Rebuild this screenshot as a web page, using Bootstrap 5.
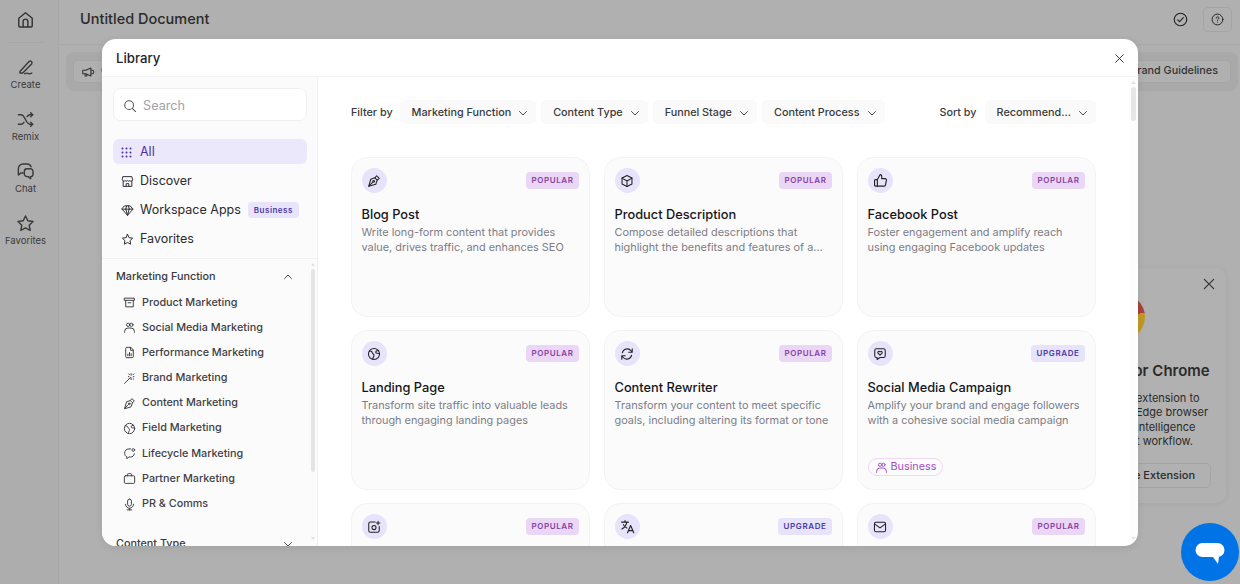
<!DOCTYPE html>
<html lang="en">
<head>
  <meta charset="UTF-8">
  <title>Library</title>
  <link href="https://cdn.jsdelivr.net/npm/bootstrap@5.3.0/dist/css/bootstrap.min.css" rel="stylesheet">
  <style>
    html, body { height: 100%; overflow: hidden; }
    body { font-family: Inter, "Liberation Sans", sans-serif; background: #b0b0b0; color: #26262b; }
    svg.ic { fill: none; stroke: currentColor; stroke-width: 1.8; stroke-linecap: round; stroke-linejoin: round; flex: none; }

    /* page behind the dialog */
    .app-rail { width: 59px; padding-right: 7px; background: #adadad; border-right: 1px solid #a8a8a8; color: #333; flex: none; }
    .rail-home { height: 43px; width: 36px; padding-bottom: 3px; border-bottom: 1px solid #a6a6a6; margin-bottom: 1px; }
    .rail-item { width: 52px; height: 52px; font-size: 9.5px; color: #3a3a3a; padding-top: 14px; line-height: 12px; gap: 2px; }
    .app-top { height: 45px; padding: 0 8px 6px 21px; border-bottom: 1px solid #a8a8a8; }
    .app-title { font-size: 14.5px; font-weight: 500; color: #2a2a2a; }
    .help-box { width: 29px; height: 25px; border: 1px solid #a4a4a4; border-radius: 5px; margin-left: 15px; }
    .tool-row { padding: 7px 2px 0 7px; }
    .tool-wrap { background: #a9a9a9; border-radius: 8px; padding: 8px 7px; height: 39px; }
    .tool-chip { background: #b0b0b0; border: 1px solid #a6a6a6; border-radius: 5px; height: 23px; font-size: 10.8px; padding: 0 12px 0 7px; color: #333; font-weight: 500; gap: 6px; }

    .ext-pop { position: absolute; top: 268px; left: 1098px; width: 128px; height: 235px; background: #b1b1b1; border-radius: 10px; box-shadow: 0 1px 6px rgba(0,0,0,.06); color: #2b2b2b; padding: 26px 15px 0 1px; }
    .ext-close { position: absolute; top: 8px; right: 9px; color: #333; }
    .ext-logo { width: 46px; height: 46px; flex: none; border-radius: 50%; background: conic-gradient(#a9413a 0 22%, #bf9a24 22% 60%, #4c8a53 60%); margin-bottom: 22px; }
    .ext-head { font-size: 15px; font-weight: 600; margin-bottom: 11px; line-height: 18px; white-space: nowrap; padding-left: 29px; }
    .ext-text { font-size: 11px; line-height: 14.4px; white-space: nowrap; margin-bottom: 14px; padding-left: 37px; }
    .ext-btn { height: 25px; border: 1px solid #a4a4a4; border-radius: 5px; font-size: 11px; font-weight: 500; padding-right: 15px; white-space: nowrap; }
    .chat-fab { position: absolute; left: 1181px; top: 523px; width: 58px; height: 58px; border-radius: 50%; background: #0073e6; }

    /* dialog */
    .lib-dialog { position: absolute; left: 102px; top: 39px; width: 1036px; height: 507px; background: #fff; border-radius: 14px; overflow: hidden; display: flex; flex-direction: column; box-shadow: 0 2px 8px rgba(0,0,0,.08); }
    .lib-head { height: 38px; padding: 2px 12px 0 14px; border-bottom: 1px solid #f4f4f5; flex: none; }
    .lib-head-title { font-size: 13.2px; font-weight: 500; color: #24242a; }
    .lib-side { width: 216px; background: #fbfbfb; border-right: 1px solid #f1f1f2; flex: none; min-height: 0; }
    .side-top { padding: 11px 10px 7px 11px; border-bottom: 1px solid #f1f1f2; }
    .side-search { height: 33px; background: #fff; border: 1px solid #f0f0f1; border-radius: 7px; padding: 2px 9px 0; font-size: 12.7px; color: #a2a2a8; margin-bottom: 18px; gap: 6px; }
    .side-nav { gap: 4px; }
    .side-link { height: 25px; padding: 1px 8px 0; border-radius: 6px; font-size: 12.5px; color: #2a2a30; gap: 6px; white-space: nowrap; }
    .side-link.is-on { background: #ece8fc; color: #4a2fa3; }
    .biz-tag { background: #e8e4fb; color: #4f3ba8; font-size: 8px; font-weight: 600; letter-spacing: .5px; padding: 0 6px; height: 16px; line-height: 16px; border-radius: 4px; margin-left: 1px; }
    .side-list { padding: 5px 0 0 14px; min-width: 0; }
    .side-group { height: 26px; padding: 0 14px 0 0; font-size: 10.8px; font-weight: 500; color: #3a3a40; }
    .side-row { height: 25.2px; padding-left: 7px; font-size: 10.8px; font-weight: 500; color: #3f3f45; gap: 6px; white-space: nowrap; }
    .side-bar-col { width: 9px; padding: 0 2px 0 3px; flex: none; }
    .side-thumb { height: 203px; background: #e4e4e6; border-radius: 3px; }
    .bar-arrow { height: 10px; color: #e2e2e4; line-height: 0; }

    .lib-main { min-width: 0; }
    .lib-scroll { padding: 23px 0 0 33px; min-width: 0; }
    .filter-row { width: 745px; height: 24px; margin-bottom: 33px; font-size: 10.8px; color: #3a3a40; font-weight: 500; }
    .filter-lab { padding-top: 2px; margin-right: 8px; }
    .filter-btn { height: 24px; background: #fafafa; border: 0; border-radius: 5px; font-size: 10.8px; font-weight: 500; color: #3a3a40; padding: 2px 7px 0 12px; gap: 6px; white-space: nowrap; --bs-btn-hover-bg: #f4f4f4; }
    .filter-group { gap: 5px; margin-left: -1px; }
    .tile-grid { display: grid; grid-template-columns: repeat(3, 239px); grid-auto-rows: 160px; column-gap: 14px; row-gap: 13px; }
    .tile { background: #fbfbfc; border: 1px solid #f3f3f5; border-radius: 16px; }
    .tile .card-body { padding: 10px 10px 13px 9.5px; }
    .tile-icon { width: 25px; height: 25px; border-radius: 50%; background: #e6e3fb; color: #222; }
    .tile-badge { font-size: 8px; font-weight: 600; letter-spacing: .6px; padding: 0 5.5px; height: 17px; line-height: 17px; border-radius: 4px; margin-top: 4px; }
    .tile-badge.is-pop { background: #e9d7f5; color: #8a3fa5; }
    .tile-badge.is-up { background: #e6e3fb; color: #4b3aa8; }
    .tile-title { font-size: 12.8px; font-weight: 500; color: #16161a; line-height: 16px; margin: 14px 0 2px; }
    .tile-desc { font-size: 10.9px; line-height: 14.5px; color: #7d7d86; margin: 0; }
    .biz-chip { border: 1px solid #eed8f4; border-radius: 9px; height: 18px; font-size: 10.8px; color: #a44fc0; padding: 1px 6px 0; gap: 3px; align-self: flex-start; }
    .main-bar-col { width: 8px; padding: 0 1px 0 2px; flex: none; margin-right: 1px; background: #fdfdfd; }
    .main-thumb { height: 34px; background: #e6e6e8; border-radius: 3px; }
  </style>
</head>
<body>

  <!-- page under the dialog -->
  <div class="d-flex h-100">
    <div class="app-rail d-flex flex-column align-items-center">
      <div class="rail-home d-flex align-items-center justify-content-center">
        <svg class="ic" width="19" height="19" viewBox="0 0 24 24"><path d="M3.5 10.5 12 3.500l8.500 7V20a1.500 1.500 0 0 1-1.500 1.500H5A1.500 1.500 0 0 1 3.500 20z"/><path d="M9 21v-6.500a3 3 0 0 1 6 0V21"/></svg>
      </div>
      <div class="rail-item d-flex flex-column align-items-center">
        <svg class="ic" width="19" height="19" viewBox="0 0 24 24"><path d="M5 17 16.500 4.500a2.200 2.200 0 0 1 3.200 3L8.500 19H5z"/><path d="M11 20c2-1.500 3-1 4-.5s2 .8 5-.5"/></svg>
        <span>Create</span>
      </div>
      <div class="rail-item d-flex flex-column align-items-center">
        <svg class="ic" width="19" height="19" viewBox="0 0 24 24"><path d="M3 6h3.500c5 0 6 12 11 12H21"/><path d="M3 18h3.500c1.500 0 2.500-1 3.500-2.500M14 8.500C15 7 16 6 17.500 6H21"/><path d="m18.500 3.500 2.500 2.500-2.500 2.500M18.500 15.500l2.500 2.500-2.500 2.500"/></svg>
        <span>Remix</span>
      </div>
      <div class="rail-item d-flex flex-column align-items-center">
        <svg class="ic" width="19" height="19" viewBox="0 0 24 24"><path d="M9 2.500h5a5.500 5.500 0 0 1 5 3.500M9 2.500A6 6 0 0 0 3 8.500v8l3-2.500h3"/><path d="M14 8.500h4a3.500 3.500 0 0 1 3.500 3.500v3a3.500 3.500 0 0 1-3 3.500V21l-3-2.500H14a3.500 3.500 0 0 1-3.500-3.500v-3A3.500 3.500 0 0 1 14 8.500z"/></svg>
        <span>Chat</span>
      </div>
      <div class="rail-item d-flex flex-column align-items-center">
        <svg class="ic" width="19" height="19" viewBox="0 0 24 24"><path d="m12 2.500 2.900 6.100 6.600.9-4.800 4.600 1.200 6.600-5.900-3.200-5.900 3.200 1.200-6.600L2.500 9.500l6.600-.9z"/></svg>
        <span>Favorites</span>
      </div>
    </div>

    <div class="flex-grow-1 d-flex flex-column">
      <div class="app-top d-flex align-items-center justify-content-between">
        <div class="app-title">Untitled Document</div>
        <div class="d-flex align-items-center" style="color:#222">
          <svg class="ic" width="15" height="15" viewBox="0 0 24 24"><circle cx="12" cy="12" r="10"/><path d="m7.500 12.500 3 3 6-6.500"/></svg>
          <div class="help-box d-flex align-items-center justify-content-center">
            <svg class="ic" width="13" height="13" viewBox="0 0 24 24"><circle cx="12" cy="12" r="10"/><path d="M9.500 9.500a2.500 2.500 0 1 1 3.800 2.100c-.8.500-1.300 1-1.300 2"/><path d="M12 17h.01"/></svg>
          </div>
        </div>
      </div>
      <div class="tool-row d-flex justify-content-between">
        <div class="tool-wrap">
          <div class="tool-chip d-flex align-items-center">
            <svg class="ic" width="14" height="14" viewBox="0 0 24 24"><path d="M3 9v6h5l9 4V5L8 9z"/><path d="M7 15v4h3v-3M17 9h2a3 3 0 0 1 0 6h-2"/></svg>
            <span>Campaign</span>
          </div>
        </div>
        <div class="tool-wrap">
          <div class="tool-chip d-flex align-items-center">Brand Guidelines</div>
        </div>
      </div>
    </div>
  </div>

  <div class="ext-pop d-flex flex-column align-items-stretch">
    <svg class="ic ext-close" width="16" height="16" viewBox="0 0 24 24"><path d="M5 5l14 14M19 5 5 19"/></svg>
    <div class="ext-logo align-self-start"></div>
    <div class="ext-head">for Chrome</div>
    <div class="ext-text">extension to<br>Edge browser<br>intelligence<br>t workflow.</div>
    <div class="ext-btn d-flex align-items-center justify-content-end">Chrome Extension</div>
  </div>

  <div class="chat-fab d-flex align-items-center justify-content-center">
    <svg width="32" height="32" viewBox="0 0 32 32"><rect x="1.500" y="7" width="29" height="14" rx="7" fill="#fff"/><path d="M19 21h6l-1 7z" fill="#fff"/></svg>
  </div>

  <!-- Library dialog -->
  <div class="lib-dialog">
    <div class="lib-head d-flex align-items-center justify-content-between">
      <div class="lib-head-title">Library</div>
      <svg class="ic" width="13" height="13" viewBox="0 0 24 24" style="color:#333"><path d="M5 5l14 14M19 5 5 19"/></svg>
    </div>

    <div class="d-flex flex-grow-1 overflow-hidden">
      <!-- sidebar -->
      <div class="lib-side d-flex flex-column">
        <div class="side-top">
          <div class="side-search d-flex align-items-center">
            <svg class="ic" style="color:#555" width="14" height="14" viewBox="0 0 24 24"><circle cx="10.500" cy="10.500" r="7.500"/><path d="m16 16 5.500 5.500"/></svg>
            <span>Search</span>
          </div>
          <div class="side-nav d-flex flex-column">
            <div class="side-link is-on d-flex align-items-center">
              <svg width="11" height="11" viewBox="0 0 11 11" fill="currentColor" style="flex:none;margin-right:2px"><circle cx="1.500" cy="1.500" r="1"/><circle cx="5.500" cy="1.500" r="1"/><circle cx="9.500" cy="1.500" r="1"/><circle cx="1.500" cy="5.500" r="1"/><circle cx="5.500" cy="5.500" r="1"/><circle cx="9.500" cy="5.500" r="1"/><circle cx="1.500" cy="9.500" r="1"/><circle cx="5.500" cy="9.500" r="1"/><circle cx="9.500" cy="9.500" r="1"/></svg>
              <span>All</span>
            </div>
            <div class="side-link d-flex align-items-center">
              <svg class="ic" width="13" height="13" viewBox="0 0 24 24" stroke-width="2"><path d="M4 3h16l1.500 6a3 3 0 0 1-5 1.500 3.500 3.500 0 0 1-4.500 0 3.500 3.500 0 0 1-4.500 0 3 3 0 0 1-5-1.500z"/><path d="M4 11v10h16V11M9.500 21v-5h5v5"/></svg>
              <span>Discover</span>
            </div>
            <div class="side-link d-flex align-items-center">
              <svg class="ic" width="13" height="13" viewBox="0 0 24 24" stroke-width="2"><path d="M7 3.500h10L22 9.500 12 21 2 9.500z"/><path d="M2 9.500h20M9 9.500 12 21l3-11.500M8.500 9.500 10.500 3.500M15.500 9.500l-2-6"/></svg>
              <span>Workspace Apps</span>
              <span class="biz-tag">Business</span>
            </div>
            <div class="side-link d-flex align-items-center">
              <svg class="ic" width="13" height="13" viewBox="0 0 24 24" stroke-width="2"><path d="m12 2.500 2.900 6.100 6.600.9-4.800 4.600 1.200 6.600-5.900-3.200-5.900 3.200 1.200-6.600L2.500 9.500l6.600-.9z"/></svg>
              <span>Favorites</span>
            </div>
          </div>
        </div>

        <div class="d-flex flex-grow-1 overflow-hidden">
          <div class="side-list flex-grow-1">
            <div class="side-group d-flex align-items-center justify-content-between">
              <span>Marketing Function</span>
              <svg class="ic" width="12" height="12" viewBox="0 0 24 24" stroke-width="2.200"><path d="m5 15 7-7 7 7"/></svg>
            </div>
            <div class="side-row d-flex align-items-center">
              <svg class="ic" width="13" height="13" viewBox="0 0 24 24" stroke-width="2"><path d="M3 4h18v4H3zM5 8v12h14V8M9.500 12.500h5"/></svg>
              <span>Product Marketing</span>
            </div>
            <div class="side-row d-flex align-items-center">
              <svg class="ic" width="13" height="13" viewBox="0 0 24 24" stroke-width="2"><circle cx="9.500" cy="7" r="3"/><circle cx="15.500" cy="7" r="3"/><path d="M3 21v-2a6 6 0 0 1 6-6h6a6 6 0 0 1 6 6v2"/></svg>
              <span>Social Media Marketing</span>
            </div>
            <div class="side-row d-flex align-items-center">
              <svg class="ic" width="13" height="13" viewBox="0 0 24 24" stroke-width="2"><path d="M14 2.500H7a2 2 0 0 0-2 2v15a2 2 0 0 0 2 2h10a2 2 0 0 0 2-2V8z"/><path d="M14 2.500V8h5M9 18v-3M12 18v-6M15 18v-4"/></svg>
              <span>Performance Marketing</span>
            </div>
            <div class="side-row d-flex align-items-center">
              <svg class="ic" width="13" height="13" viewBox="0 0 24 24" stroke-width="1.800"><path d="M3 21 14 10"/><path d="M15 3v3M15 11v3M11 8.500h-1M20 8.500h-1M18.500 5l1.500-1.500M11.500 12l-.5.500M18.500 12l1.500 1.500M12 5l-1.500-1.500"/></svg>
              <span>Brand Marketing</span>
            </div>
            <div class="side-row d-flex align-items-center">
              <svg class="ic" width="13" height="13" viewBox="0 0 24 24" stroke-width="2"><path d="m3 21 3.500-12 7-2.500 4 4-2.500 7z"/><path d="m3 21 7-7"/><circle cx="11.500" cy="12.500" r="1.500"/><path d="m13.500 6.500 3-3.500 4.500 4.500-3.500 3"/></svg>
              <span>Content Marketing</span>
            </div>
            <div class="side-row d-flex align-items-center">
              <svg class="ic" width="13" height="13" viewBox="0 0 24 24" stroke-width="2"><circle cx="12" cy="12" r="9.500"/><path d="M4 7c3 0 5 1 5 3s3 1 3 4-2 3-2 7M20 6c-3 0-5 1-5 3 0 1.500 2 2 5 2 1 0 1.500 1 1.500 1"/></svg>
              <span>Field Marketing</span>
            </div>
            <div class="side-row d-flex align-items-center">
              <svg class="ic" width="13" height="13" viewBox="0 0 24 24" stroke-width="2"><path d="M14 3.500H11C6 3.500 3 7 3 11.500c0 3 1.500 5.500 4 6.500v3.500l4-3h3c4 0 6.500-2.500 7-6"/><circle cx="19" cy="5.500" r="2.500"/></svg>
              <span>Lifecycle Marketing</span>
            </div>
            <div class="side-row d-flex align-items-center">
              <svg class="ic" width="13" height="13" viewBox="0 0 24 24" stroke-width="2"><rect x="2.500" y="7" width="19" height="14" rx="2"/><path d="M8 7V5a2 2 0 0 1 2-2h4a2 2 0 0 1 2 2v2"/></svg>
              <span>Partner Marketing</span>
            </div>
            <div class="side-row d-flex align-items-center">
              <svg class="ic" width="13" height="13" viewBox="0 0 24 24" stroke-width="2"><rect x="8.500" y="2" width="7" height="13" rx="3.500"/><path d="M4.500 11.500a7.500 7.500 0 0 0 15 0M12 19v3M8 22h8"/></svg>
              <span>PR &amp; Comms</span>
            </div>
            <div class="side-group d-flex align-items-center justify-content-between" style="margin-top:14px">
              <span>Content Type</span>
              <svg class="ic" width="12" height="12" viewBox="0 0 24 24" stroke-width="2.200"><path d="m5 9 7 7 7-7"/></svg>
            </div>
          </div>
          <div class="side-bar-col d-flex flex-column">
            <div class="bar-arrow"><svg width="4" height="8" viewBox="0 0 4 8" fill="currentColor"><path d="M0 7 2 4l2 3z"/></svg></div>
            <div class="side-thumb"></div>
            <div class="bar-arrow mt-auto"><svg width="4" height="8" viewBox="0 0 4 8" fill="currentColor"><path d="M0 1h4L2 4z"/></svg></div>
          </div>
        </div>
      </div>

      <!-- content -->
      <div class="lib-main flex-grow-1 d-flex">
        <div class="lib-scroll flex-grow-1 overflow-hidden">
          <div class="filter-row d-flex align-items-center">
            <span class="filter-lab">Filter by</span>
            <div class="d-flex filter-group flex-grow-1">
              <button class="btn filter-btn d-flex align-items-center" type="button">Marketing Function <svg class="ic" width="12" height="12" viewBox="0 0 24 24" stroke-width="2.400"><path d="m5 9 7 7 7-7"/></svg></button>
              <button class="btn filter-btn d-flex align-items-center" type="button">Content Type <svg class="ic" width="12" height="12" viewBox="0 0 24 24" stroke-width="2.400"><path d="m5 9 7 7 7-7"/></svg></button>
              <button class="btn filter-btn d-flex align-items-center" type="button">Funnel Stage <svg class="ic" width="12" height="12" viewBox="0 0 24 24" stroke-width="2.400"><path d="m5 9 7 7 7-7"/></svg></button>
              <button class="btn filter-btn d-flex align-items-center" type="button">Content Process <svg class="ic" width="12" height="12" viewBox="0 0 24 24" stroke-width="2.400"><path d="m5 9 7 7 7-7"/></svg></button>
            </div>
            <span class="filter-lab">Sort by</span>
            <button class="btn filter-btn d-flex align-items-center" type="button">Recommend... <svg class="ic" width="12" height="12" viewBox="0 0 24 24" stroke-width="2.400"><path d="m5 9 7 7 7-7"/></svg></button>
          </div>

          <div class="tile-grid">
            <div class="card tile"><div class="card-body d-flex flex-column">
              <div class="d-flex justify-content-between align-items-start">
                <div class="tile-icon d-flex align-items-center justify-content-center"><svg class="ic" width="14" height="14" viewBox="0 0 24 24" stroke-width="2"><path d="m3 21 3.500-12 7-2.500 4 4-2.500 7z"/><path d="m3 21 7-7"/><circle cx="11.500" cy="12.500" r="1.500"/><path d="m13.500 6.500 3-3.500 4.500 4.500-3.500 3"/></svg></div>
                <span class="badge tile-badge is-pop">POPULAR</span>
              </div>
              <div class="tile-title">Blog Post</div>
              <p class="tile-desc">Write long-form content that provides value, drives traffic, and enhances SEO</p>
            </div></div>

            <div class="card tile"><div class="card-body d-flex flex-column">
              <div class="d-flex justify-content-between align-items-start">
                <div class="tile-icon d-flex align-items-center justify-content-center"><svg class="ic" width="14" height="14" viewBox="0 0 24 24" stroke-width="2"><path d="M12 2.500 20.500 7v10L12 21.500 3.500 17V7z"/><path d="m3.500 7 8.500 5 8.500-5M12 12v9.500"/></svg></div>
                <span class="badge tile-badge is-pop">POPULAR</span>
              </div>
              <div class="tile-title">Product Description</div>
              <p class="tile-desc">Compose detailed descriptions that<br>highlight the benefits and features of a...</p>
            </div></div>

            <div class="card tile"><div class="card-body d-flex flex-column">
              <div class="d-flex justify-content-between align-items-start">
                <div class="tile-icon d-flex align-items-center justify-content-center"><svg class="ic" width="15" height="15" viewBox="0 0 24 24" stroke-width="2"><path d="M7 10.500v10.500H4a1.500 1.500 0 0 1-1.500-1.500V12A1.500 1.500 0 0 1 4 10.500z"/><path d="M7 10.500 11.500 2.500A2.500 2.500 0 0 1 14 5v4h5.500a2 2 0 0 1 2 2.400l-1.500 8A2 2 0 0 1 18 21H7"/></svg></div>
                <span class="badge tile-badge is-pop">POPULAR</span>
              </div>
              <div class="tile-title">Facebook Post</div>
              <p class="tile-desc">Foster engagement and amplify reach using engaging Facebook updates</p>
            </div></div>

            <div class="card tile"><div class="card-body d-flex flex-column">
              <div class="d-flex justify-content-between align-items-start">
                <div class="tile-icon d-flex align-items-center justify-content-center"><svg class="ic" width="14" height="14" viewBox="0 0 24 24" stroke-width="2"><circle cx="12" cy="12" r="9.500"/><path d="M4 7c3 0 5 1 5 3s3 1 3 4-2 3-2 7M20 6c-3 0-5 1-5 3 0 1.500 2 2 5 2 1 0 1.500 1 1.500 1"/></svg></div>
                <span class="badge tile-badge is-pop">POPULAR</span>
              </div>
              <div class="tile-title">Landing Page</div>
              <p class="tile-desc">Transform site traffic into valuable leads through engaging landing pages</p>
            </div></div>

            <div class="card tile"><div class="card-body d-flex flex-column">
              <div class="d-flex justify-content-between align-items-start">
                <div class="tile-icon d-flex align-items-center justify-content-center"><svg class="ic" width="14" height="14" viewBox="0 0 24 24" stroke-width="2"><path d="M4 10a8.500 8.500 0 0 1 15-3.500L21 9M21 3v6h-6"/><path d="M20 14a8.500 8.500 0 0 1-15 3.500L3 15M3 21v-6h6"/></svg></div>
                <span class="badge tile-badge is-pop">POPULAR</span>
              </div>
              <div class="tile-title">Content Rewriter</div>
              <p class="tile-desc">Transform your content to meet specific goals, including altering its format or tone</p>
            </div></div>

            <div class="card tile"><div class="card-body d-flex flex-column">
              <div class="d-flex justify-content-between align-items-start">
                <div class="tile-icon d-flex align-items-center justify-content-center"><svg class="ic" width="14" height="14" viewBox="0 0 24 24" stroke-width="2"><path d="M6 3h12a3 3 0 0 1 3 3v9a3 3 0 0 1-3 3h-6l-5 3.500V18H6a3 3 0 0 1-3-3V6a3 3 0 0 1 3-3z"/><path d="M12 14 8.500 10.500a2 2 0 0 1 3.500-2 2 2 0 0 1 3.500 2z"/></svg></div>
                <span class="badge tile-badge is-up">UPGRADE</span>
              </div>
              <div class="tile-title">Social Media Campaign</div>
              <p class="tile-desc">Amplify your brand and engage followers with a cohesive social media campaign</p>
              <div class="biz-chip d-flex align-items-center mt-auto">
                <svg class="ic" width="13" height="13" viewBox="0 0 24 24"><circle cx="9.500" cy="7" r="3"/><circle cx="15.500" cy="7" r="3"/><path d="M3 21v-2a6 6 0 0 1 6-6h6a6 6 0 0 1 6 6v2"/></svg>
                <span>Business</span>
              </div>
            </div></div>

            <div class="card tile"><div class="card-body d-flex flex-column">
              <div class="d-flex justify-content-between align-items-start">
                <div class="tile-icon d-flex align-items-center justify-content-center"><svg class="ic" width="14" height="14" viewBox="0 0 24 24" stroke-width="2"><path d="M14 3.500H6a3 3 0 0 0-3 3V18a3 3 0 0 0 3 3h12a3 3 0 0 0 3-3v-7"/><circle cx="12" cy="13" r="3.500"/><path d="M19 2v6M16 5h6"/></svg></div>
                <span class="badge tile-badge is-pop">POPULAR</span>
              </div>
            </div></div>

            <div class="card tile"><div class="card-body d-flex flex-column">
              <div class="d-flex justify-content-between align-items-start">
                <div class="tile-icon d-flex align-items-center justify-content-center"><svg class="ic" width="15" height="15" viewBox="0 0 24 24" stroke-width="2"><path d="M2.500 5h11M8 2.500V5M11 5c-1 5-4 9-8 11M5.500 9c1 2.500 3 4.500 5.500 5.500"/><path d="m12 22 5-11.500L22 22M13.500 18.500h7"/></svg></div>
                <span class="badge tile-badge is-up">UPGRADE</span>
              </div>
            </div></div>

            <div class="card tile"><div class="card-body d-flex flex-column">
              <div class="d-flex justify-content-between align-items-start">
                <div class="tile-icon d-flex align-items-center justify-content-center"><svg class="ic" width="14" height="14" viewBox="0 0 24 24" stroke-width="2"><rect x="2.500" y="4" width="19" height="16" rx="2.500"/><path d="m3 7 9 6.500L21 7"/></svg></div>
                <span class="badge tile-badge is-pop">POPULAR</span>
              </div>
            </div></div>
          </div>
        </div>
        <div class="main-bar-col d-flex flex-column">
          <div class="bar-arrow"><svg width="5" height="8" viewBox="0 0 5 8" fill="currentColor"><path d="M0 7 2.500 4 5 7z"/></svg></div>
          <div class="main-thumb"></div>
          <div class="bar-arrow mt-auto"><svg width="5" height="8" viewBox="0 0 5 8" fill="currentColor"><path d="M0 1h5L2.500 4z"/></svg></div>
        </div>
      </div>
    </div>
  </div>

</body>
</html>
